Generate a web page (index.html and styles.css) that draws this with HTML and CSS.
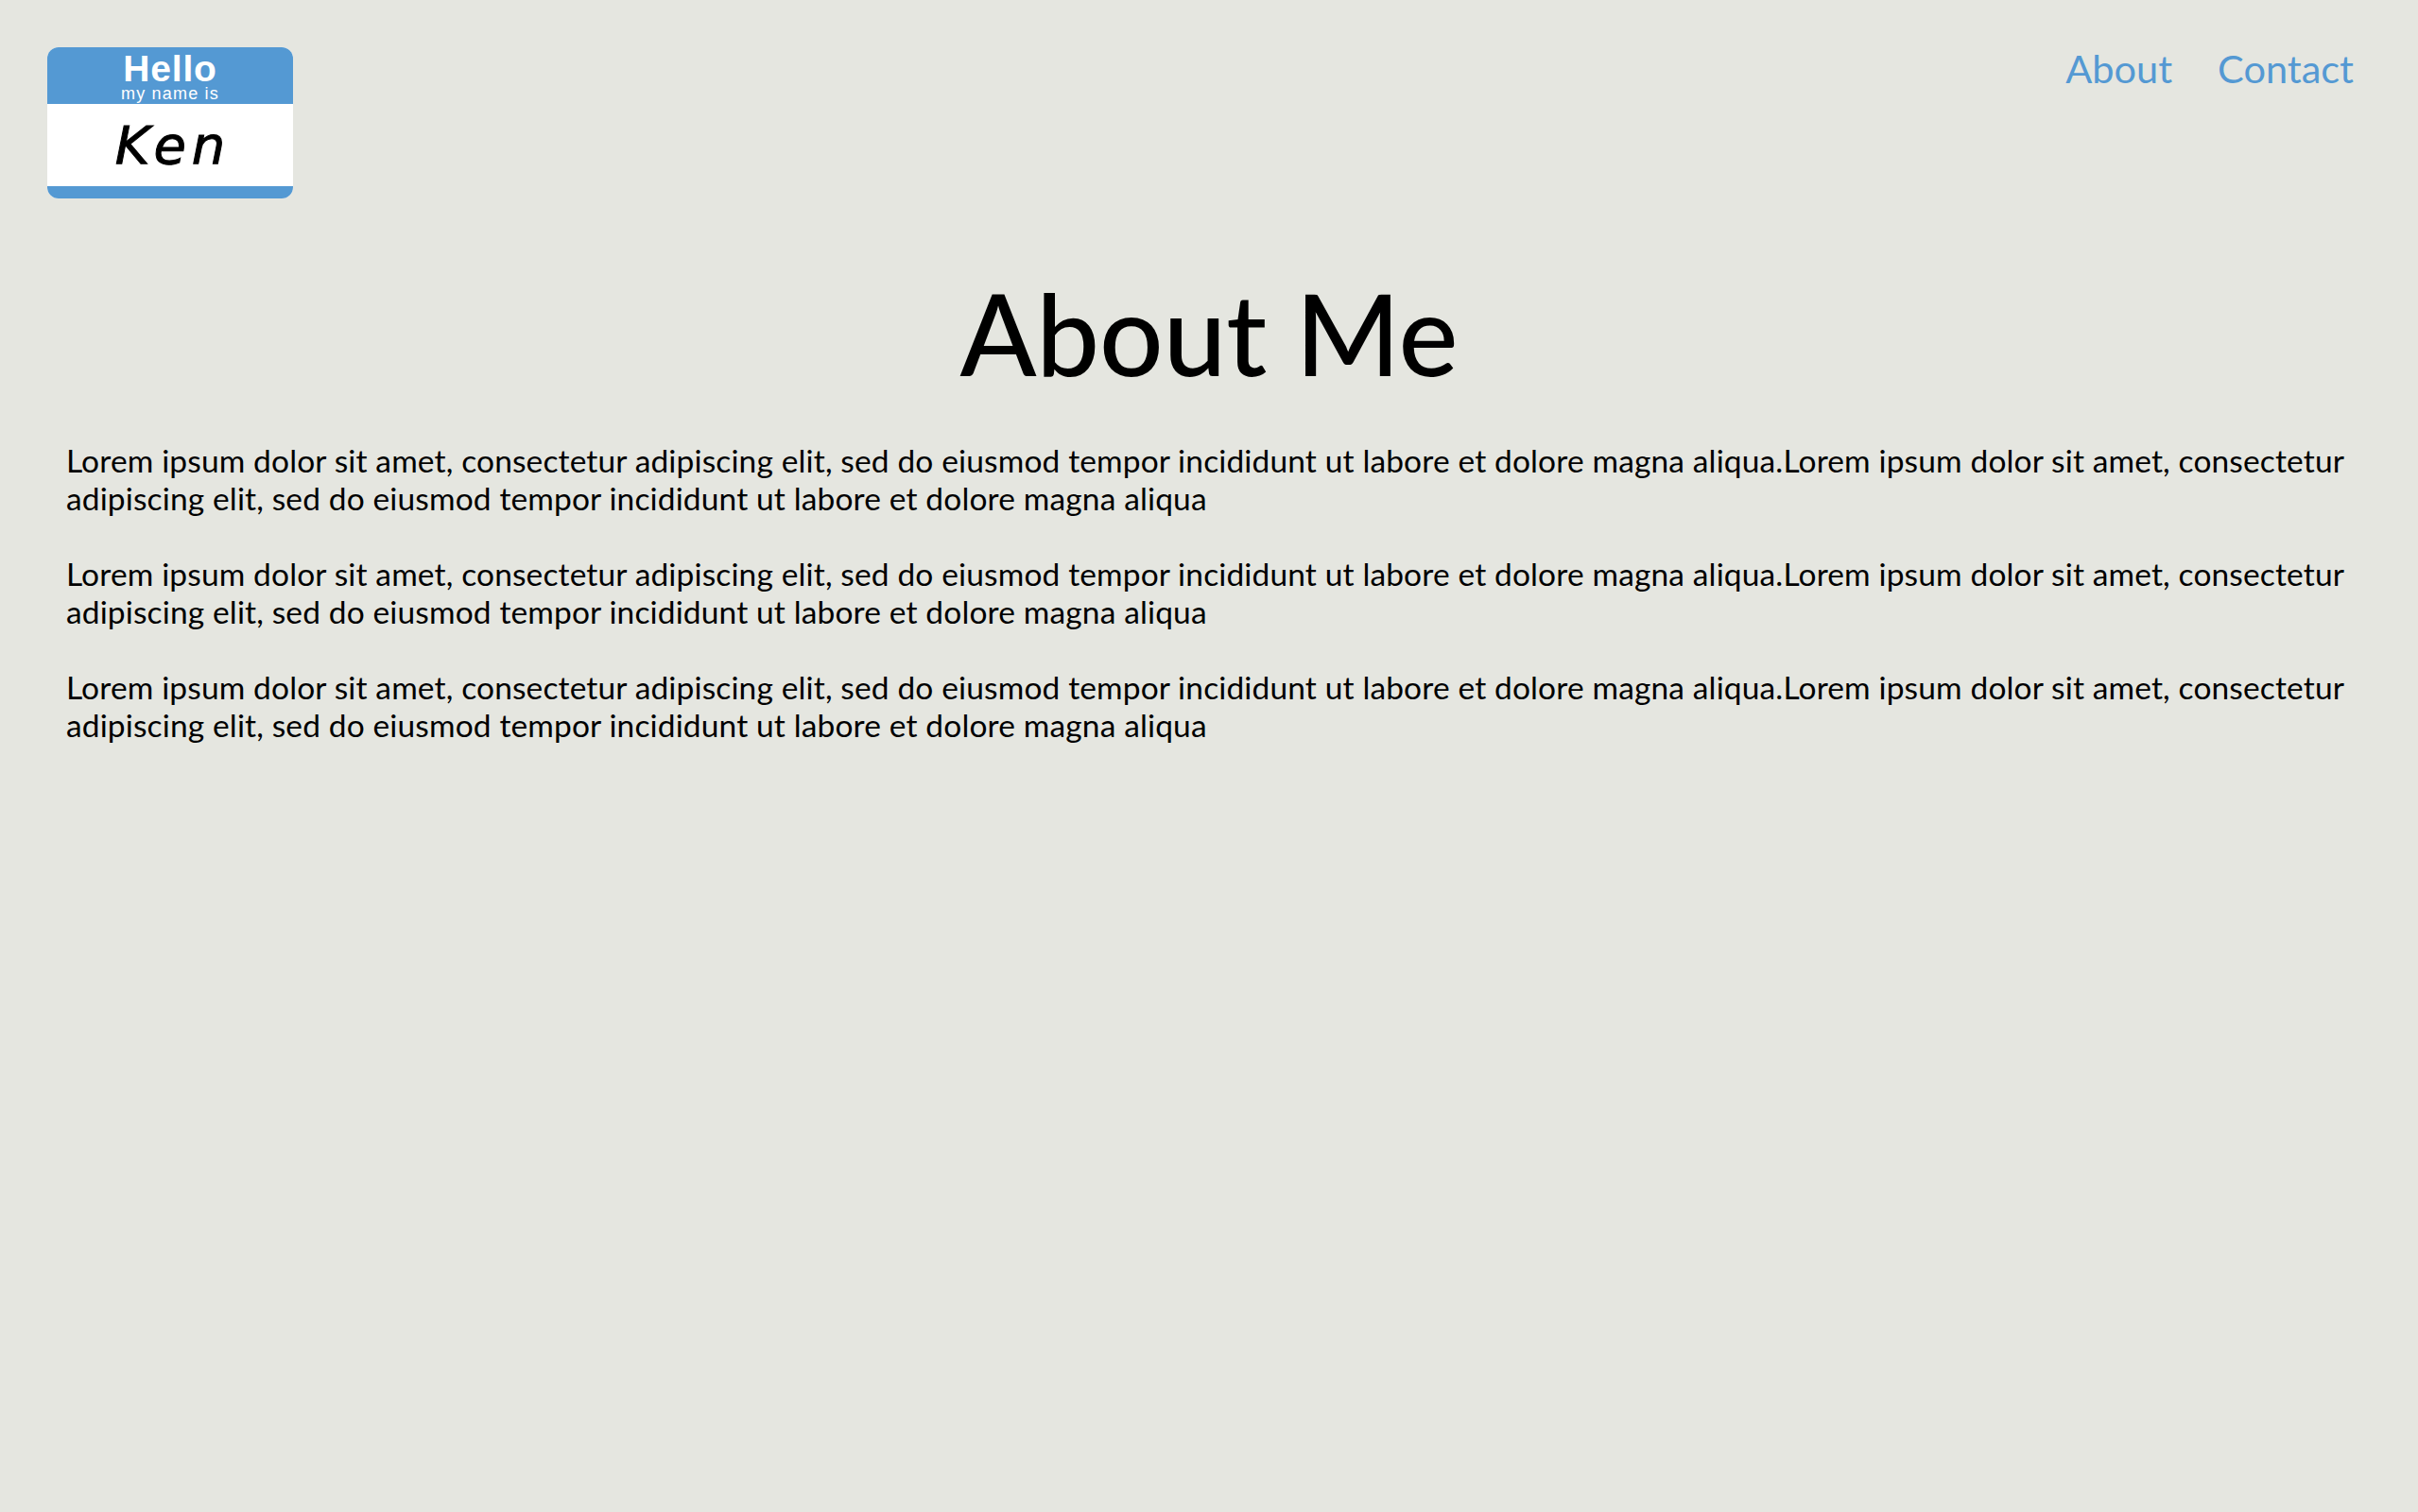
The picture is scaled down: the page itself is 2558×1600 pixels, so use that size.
FILE: index.html
```html
<html lang="en">
    <head>
        <meta charset="utf-8" />
        <title>About Me</title>
        <link rel="stylesheet" href="styles.css">
    </head>
    <body>
        <header class="top">
            <a class="tag" href="#">
                <div class="tag-head">
                    <span class="tag-hello">Hello</span>
                    <span class="tag-small">my name is</span>
                </div>
                <div class="tag-name">Ken</div>
                <div class="tag-foot"></div>
            </a>
            <nav class="links">
                <a href="#">About</a>
                <a href="#">Contact</a>
            </nav>
        </header>
        <main class="content">
            <h1>About Me</h1>
            <p>Lorem ipsum dolor sit amet, consectetur adipiscing elit, sed do eiusmod tempor incididunt ut labore et dolore magna aliqua.Lorem ipsum dolor sit amet, consectetur adipiscing elit, sed do eiusmod tempor incididunt ut labore et dolore magna aliqua</p>
            <p>Lorem ipsum dolor sit amet, consectetur adipiscing elit, sed do eiusmod tempor incididunt ut labore et dolore magna aliqua.Lorem ipsum dolor sit amet, consectetur adipiscing elit, sed do eiusmod tempor incididunt ut labore et dolore magna aliqua</p>
            <p>Lorem ipsum dolor sit amet, consectetur adipiscing elit, sed do eiusmod tempor incididunt ut labore et dolore magna aliqua.Lorem ipsum dolor sit amet, consectetur adipiscing elit, sed do eiusmod tempor incididunt ut labore et dolore magna aliqua</p>
        </main>
    </body>
</html>
```

FILE: styles.css
```css
body{
    margin: 0;
    min-height: 1600px;
    background: #e5e6e0;
    color: #000;
    font-family: "Lato", "Noto Sans", sans-serif;
}
.top{
    display: flex;
    justify-content: space-between;
    align-items: flex-start;
    padding: 50px 68px 0 50px;
}
.tag{
    display: flex;
    flex-direction: column;
    width: 260px;
    height: 160px;
    border-radius: 12px;
    background: #fff;
    text-decoration: none;
}
.tag-head{
    display: flex;
    flex-direction: column;
    align-items: center;
    height: 60px;
    border-radius: 12px 12px 0 0;
    background: #5499d3;
    color: #fff;
    font-family: "Liberation Sans", sans-serif;
}
.tag-hello{
    font-size: 39px;
    font-weight: bold;
    letter-spacing: 0.8px;
    line-height: 38px;
    margin-top: 4px;
}
.tag-small{
    font-size: 18px;
    letter-spacing: 1.2px;
    line-height: 15px;
}
.tag-name{
    flex: 1;
    display: flex;
    align-items: center;
    justify-content: center;
    padding-left: 6px;
    color: #000;
    font-family: "DejaVu Sans", sans-serif;
    font-style: italic;
    font-size: 56px;
    letter-spacing: 6px;
    -webkit-text-stroke: 1px #000;
}
.tag-foot{
    height: 13px;
    border-radius: 0 0 12px 12px;
    background: #5499d3;
}
.links{
    display: flex;
    gap: 48px;
    font-size: 41.5px;
    line-height: 44px;
}
.links a{
    color: #5499d3;
    text-decoration: none;
}
.content{
    padding: 0 70px;
}
h1{
    margin: 70px 0 0;
    text-align: center;
    font-size: 119px;
    font-weight: 500;
    line-height: 144px;
}
p{
    margin: 40px 0 0;
    font-size: 33.5px;
    letter-spacing: 0.14px;
    line-height: 40px;
}
h1 + p{
    margin-top: 43px;
}
```
